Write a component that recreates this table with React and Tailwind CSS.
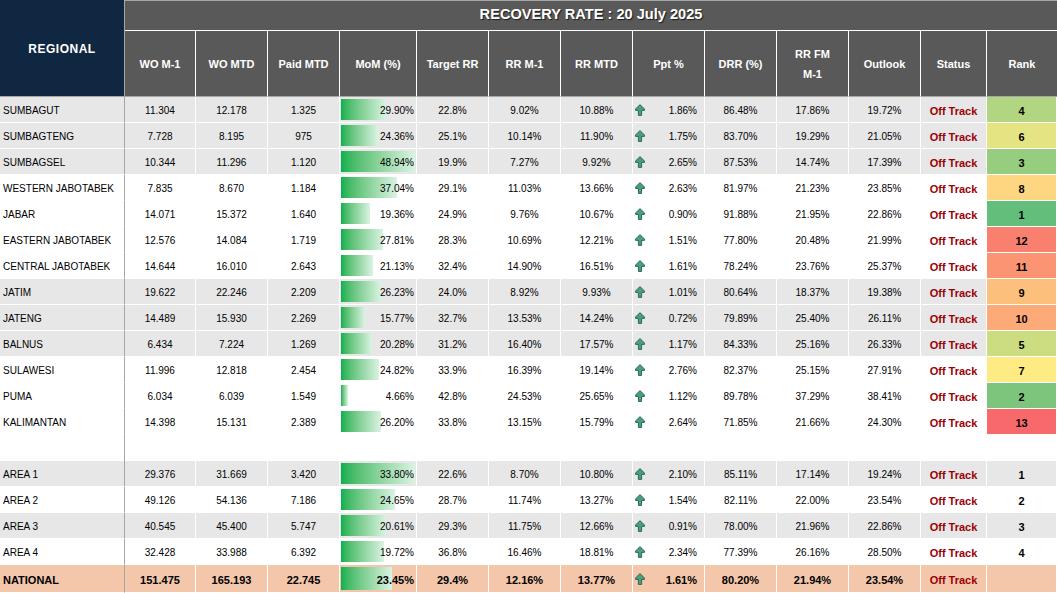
import React from "react";

const COLS =
  "grid grid-cols-[125px_71px_72px_72px_77px_72px_72px_72px_72px_72px_72px_72px_66px_70px]";

const RANK_COLORS = {
  1: "bg-[#63be7b]",
  2: "bg-[#7dc57d]",
  3: "bg-[#97cd7e]",
  4: "bg-[#b1d580]",
  5: "bg-[#cbdc81]",
  6: "bg-[#e5e483]",
  7: "bg-[#ffeb84]",
  8: "bg-[#fed580]",
  9: "bg-[#fdc07c]",
  10: "bg-[#fcaa78]",
  11: "bg-[#fa9473]",
  12: "bg-[#f97f6f]",
  13: "bg-[#f8696b]",
};

const regional = [
  ["SUMBAGUT", "11.304", "12.178", "1.325", 29.9, "22.8%", "9.02%", "10.88%", "1.86%", "86.48%", "17.86%", "19.72%", 4, true],
  ["SUMBAGTENG", "7.728", "8.195", "975", 24.36, "25.1%", "10.14%", "11.90%", "1.75%", "83.70%", "19.29%", "21.05%", 6, true],
  ["SUMBAGSEL", "10.344", "11.296", "1.120", 48.94, "19.9%", "7.27%", "9.92%", "2.65%", "87.53%", "14.74%", "17.39%", 3, true],
  ["WESTERN JABOTABEK", "7.835", "8.670", "1.184", 37.04, "29.1%", "11.03%", "13.66%", "2.63%", "81.97%", "21.23%", "23.85%", 8, false],
  ["JABAR", "14.071", "15.372", "1.640", 19.36, "24.9%", "9.76%", "10.67%", "0.90%", "91.88%", "21.95%", "22.86%", 1, false],
  ["EASTERN JABOTABEK", "12.576", "14.084", "1.719", 27.81, "28.3%", "10.69%", "12.21%", "1.51%", "77.80%", "20.48%", "21.99%", 12, false],
  ["CENTRAL JABOTABEK", "14.644", "16.010", "2.643", 21.13, "32.4%", "14.90%", "16.51%", "1.61%", "78.24%", "23.76%", "25.37%", 11, false],
  ["JATIM", "19.622", "22.246", "2.209", 26.23, "24.0%", "8.92%", "9.93%", "1.01%", "80.64%", "18.37%", "19.38%", 9, true],
  ["JATENG", "14.489", "15.930", "2.269", 15.77, "32.7%", "13.53%", "14.24%", "0.72%", "79.89%", "25.40%", "26.11%", 10, true],
  ["BALNUS", "6.434", "7.224", "1.269", 20.28, "31.2%", "16.40%", "17.57%", "1.17%", "84.33%", "25.16%", "26.33%", 5, true],
  ["SULAWESI", "11.996", "12.818", "2.454", 24.82, "33.9%", "16.39%", "19.14%", "2.76%", "82.37%", "25.15%", "27.91%", 7, false],
  ["PUMA", "6.034", "6.039", "1.549", 4.66, "42.8%", "24.53%", "25.65%", "1.12%", "89.78%", "37.29%", "38.41%", 2, false],
  ["KALIMANTAN", "14.398", "15.131", "2.389", 26.2, "33.8%", "13.15%", "15.79%", "2.64%", "71.85%", "21.66%", "24.30%", 13, false],
];

const areas = [
  ["AREA 1", "29.376", "31.669", "3.420", 33.8, "22.6%", "8.70%", "10.80%", "2.10%", "85.11%", "17.14%", "19.24%", 1, true],
  ["AREA 2", "49.126", "54.136", "7.186", 24.65, "28.7%", "11.74%", "13.27%", "1.54%", "82.11%", "22.00%", "23.54%", 2, false],
  ["AREA 3", "40.545", "45.400", "5.747", 20.61, "29.3%", "11.75%", "12.66%", "0.91%", "78.00%", "21.96%", "22.86%", 3, true],
  ["AREA 4", "32.428", "33.988", "6.392", 19.72, "36.8%", "16.46%", "18.81%", "2.34%", "77.39%", "26.16%", "28.50%", 4, false],
];

const national = ["NATIONAL", "151.475", "165.193", "22.745", 23.45, "29.4%", "12.16%", "13.77%", "1.61%", "80.20%", "21.94%", "23.54%"];

function UpArrow() {
  return (
    <svg width="10" height="12" viewBox="0 0 10 12" className="shrink-0 -mt-[2px]">
      <path
        d="M5 0.6 L9.4 5 L9.4 6.4 L6.6 6.4 L6.6 11.4 L3.4 11.4 L3.4 6.4 L0.6 6.4 L0.6 5 Z"
        fill="#4f9d7f"
        stroke="#2b6a51"
        strokeWidth="1"
        strokeLinejoin="round"
      />
    </svg>
  );
}

function Cell({ children, className = "" }) {
  return (
    <div className={`h-[26px] pt-[3px] border-r border-b border-white flex items-center justify-center ${className}`}>
      {children}
    </div>
  );
}

function Row({ r, max, rowH = "h-[26px]", bold = false, rankCell }) {
  const [name, wo1, womtd, paid, mom, target, rrm1, rrmtd, ppt, drr, rrfm, outlook, rank, gray] = r;
  const bg = bold ? "bg-[#f4c7ab]" : gray ? "bg-[#e7e7e7]" : "bg-white";
  const w = (mom / max) * 74;
  const txt = bold ? "font-bold text-[11px]" : "";
  return (
    <>
      <div className={`${rowH} ${bg} pt-[3px] border-r border-r-[#a6a6a6] border-b border-b-white flex items-center pl-[3px] ${txt}`}>
        {name}
      </div>
      <Cell className={`${bg} ${rowH} ${txt}`}>{wo1}</Cell>
      <Cell className={`${bg} ${rowH} ${txt}`}>{womtd}</Cell>
      <Cell className={`${bg} ${rowH} ${txt}`}>{paid}</Cell>
      <div className={`${rowH} ${bg} pt-[3px] relative border-r border-b border-white flex items-center justify-end pr-[2px] ${txt}`}>
        <div
          className="absolute left-px top-[2px] bottom-[2px] bg-linear-to-r from-[#00b050] to-[#daf3e3]"
          style={{ width: `${w}px` }}
        />
        <span className="relative">{mom.toFixed(2)}%</span>
      </div>
      <Cell className={`${bg} ${rowH} ${txt}`}>{target}</Cell>
      <Cell className={`${bg} ${rowH} ${txt}`}>{rrm1}</Cell>
      <Cell className={`${bg} ${rowH} ${txt}`}>{rrmtd}</Cell>
      <div className={`${rowH} ${bg} pt-[3px] border-r border-b border-white flex items-center justify-between pl-[2px] pr-[7px] ${txt}`}>
        <UpArrow />
        <span>{ppt}</span>
      </div>
      <Cell className={`${bg} ${rowH} ${txt}`}>{drr}</Cell>
      <Cell className={`${bg} ${rowH} ${txt}`}>{rrfm}</Cell>
      <Cell className={`${bg} ${rowH} ${txt}`}>{outlook}</Cell>
      <Cell className={`${bg} ${rowH} font-bold text-[11px] text-[#9c0006]`}>Off Track</Cell>
      {rankCell ? (
        rankCell
      ) : (
        <Cell className={`${rowH} font-bold text-[11px] ${bg}`}>{rank}</Cell>
      )}
    </>
  );
}

export default function App() {
  const headers = [
    "WO M-1",
    "WO MTD",
    "Paid MTD",
    "MoM (%)",
    "Target RR",
    "RR M-1",
    "RR MTD",
    "Ppt %",
    "DRR (%)",
    null,
    "Outlook",
    "Status",
    "Rank",
  ];
  return (
    <div className="w-[1057px] h-[593px] overflow-hidden bg-white font-['Liberation_Sans',Arial,sans-serif] text-[10px] text-black leading-none">
      <div className={COLS}>
        {/* header */}
        <div className="row-span-2 h-[97px] bg-[#0f2740] border-r border-[#a6a6a6] border-b border-b-[#a6a6a6] flex items-center justify-center pt-[2px] text-white font-bold text-[12px] tracking-[0.5px]">
          REGIONAL
        </div>
        <div className="col-span-13 h-[31px] pb-[3px] bg-[#595959] border-t border-t-[#a6a6a6] border-b border-b-white flex items-center justify-center text-white font-bold text-[14.6px] [text-shadow:1px_1px_1px_rgba(0,0,0,0.7)]">
          RECOVERY RATE : 20 July 2025
        </div>
        {headers.map((h, i) => (
          <div
            key={i}
            className={`h-[66px] bg-[#595959] ${i < 12 ? "border-r border-r-white" : ""} border-b border-b-[#a6a6a6] flex items-center justify-center text-center text-white font-bold text-[11px] leading-[20px]`}
          >
            {h === null ? (
              <span>
                RR FM
                <br />
                M-1
              </span>
            ) : (
              h
            )}
          </div>
        ))}

        {/* regional rows */}
        {regional.map((r) => (
          <Row
            key={r[0]}
            r={r}
            max={48.94}
            rankCell={
              <Cell className={`font-bold text-[11px] ${RANK_COLORS[r[12]]}`}>{r[12]}</Cell>
            }
          />
        ))}

        {/* blank spacer row */}
        <div className="h-[26px] border-r border-[#a6a6a6]" />
        <div className="col-span-13 h-[26px]" />

        {/* area rows */}
        {areas.map((r) => (
          <Row key={r[0]} r={r} max={33.8} />
        ))}

        {/* national */}
        <Row
          r={[...national, "", false]}
          max={33.8}
          bold
          rowH="h-[28px]"
          rankCell={<Cell className="h-[28px] bg-[#f4c7ab]" />}
        />
      </div>
    </div>
  );
}
